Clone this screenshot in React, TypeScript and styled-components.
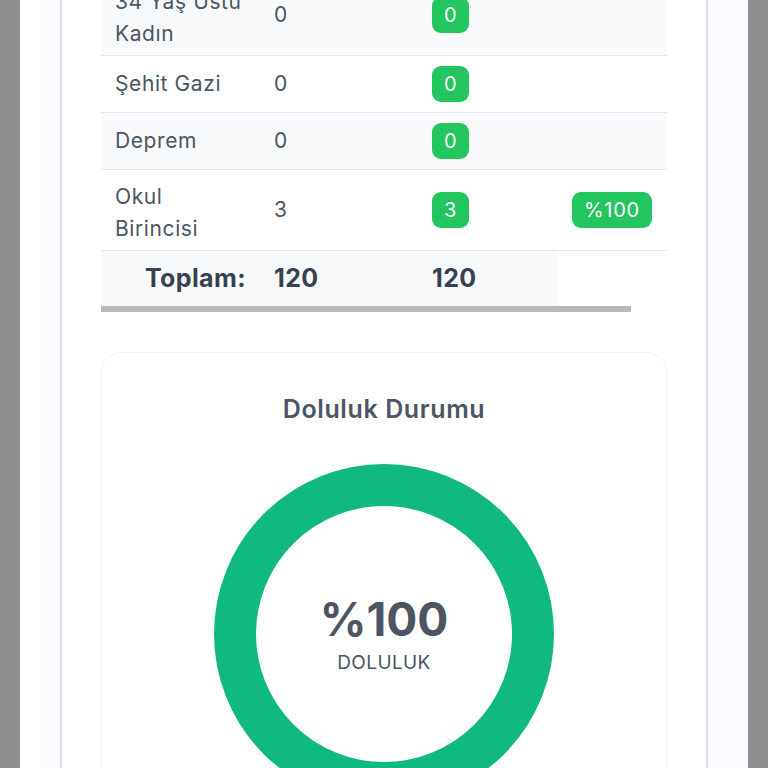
import React from "react"
import styled, { createGlobalStyle } from "styled-components"

const GlobalStyle = createGlobalStyle`
  html, body {
    margin: 0;
    padding: 0;
    background: #8e8e8e;
    font-family: Inter, "Noto Sans", "Liberation Sans", sans-serif;
    overflow: hidden;
  }
`

const Page = styled.div`
  padding: 0 20px;
  min-height: 100vh;
`

const Panel = styled.div`
  background: #ffffff;
  padding-left: 20px;
  min-height: 100vh;
`

const Shell = styled.div`
  background: #fafaff;
  padding: 0 40px 0 20px;
  min-height: 100vh;
`

const Card = styled.div`
  background: #ffffff;
  border-left: 2px solid #dedcf7;
  border-right: 2px solid #dedcf7;
  padding: 0 39px;
  min-height: 100vh;
`

const Scroller = styled.div`
  margin-top: -25px;
  overflow-x: auto;
  overflow-y: hidden;
  scrollbar-width: none;

  &::-webkit-scrollbar {
    display: none;
  }
`

const ScrollTrack = styled.div`
  height: 6px;
`

const ScrollThumb = styled.div`
  height: 100%;
  background: #b9b9b9;
`

const Table = styled.table`
  width: 604px;
  table-layout: fixed;
  border-collapse: collapse;
  color: #4b5563;
  font-size: 21px;
  letter-spacing: 0.6px;
`

const Row = styled.tr`
  border-bottom: 1px solid #e5e7eb;

  &:nth-child(odd) {
    background: #f9fafb;
  }
`

const Cell = styled.td`
  padding: 10px 14px;
  line-height: 30px;
  vertical-align: middle;
`

const Lines = styled.div`
  margin: 1px 0 -5px;
  line-height: 32px;
`

const Badge = styled.span`
  display: inline-block;
  background: #22c55e;
  color: #ffffff;
  border-radius: 9px;
  padding: 4px 12px;
  line-height: 28px;
  font-size: 20px;
  letter-spacing: 0.7px;
`

const FootCell = styled.td<{ $plain?: boolean; $right?: boolean }>`
  padding: 12px 14px 13px;
  line-height: 30px;
  font-size: 25px;
  font-weight: 700;
  letter-spacing: 0.4px;
  color: #374151;
  background: ${({ $plain }) => ($plain ? "transparent" : "#f9fafb")};
  text-align: ${({ $right }) => ($right ? "right" : "left")};
`

const ChartCard = styled.div`
  margin-top: 40px;
  border: 1px solid #f1f2f4;
  border-radius: 20px;
  padding: 40px 0;
  display: flex;
  flex-direction: column;
  align-items: center;
  box-shadow: 0 2px 6px rgba(0, 0, 0, 0.02);
`

const ChartTitle = styled.h3`
  margin: 0;
  font-size: 25px;
  line-height: 32px;
  font-weight: 600;
  letter-spacing: 0.6px;
  color: #4b5563;
`

const Donut = styled.div`
  position: relative;
  width: 340px;
  height: 340px;
  margin-top: 39px;
`

const DonutLabel = styled.div`
  position: absolute;
  inset: 0;
  display: flex;
  flex-direction: column;
  align-items: center;
  justify-content: center;
  color: #4b5563;
`

const Percent = styled.div`
  font-size: 46px;
  line-height: 52px;
  font-weight: 700;
`

const Caption = styled.div`
  margin-top: 6px;
  font-size: 19px;
  line-height: 24px;
  letter-spacing: 0.4px;
`

interface IQuota {
  name: string[];
  total: number;
  filled: number;
  rate?: string;
}

const quotas: IQuota[] = [
  { name: ["34 Yaş Üstü", "Kadın"], total: 0, filled: 0 },
  { name: ["Şehit Gazi"], total: 0, filled: 0 },
  { name: ["Deprem"], total: 0, filled: 0 },
  { name: ["Okul", "Birincisi"], total: 3, filled: 3, rate: "%100" },
]

const columns = [159, 158, 140, 147]
const tableWidth = columns.reduce((a, b) => a + b, 0)
const viewWidth = 566

const App = () => (
  <Page>
    <GlobalStyle />
    <Panel>
      <Shell>
        <Card>
          <Scroller>
            <Table>
              <colgroup>
                {columns.map((w, i) => (
                  <col key={i} style={{ width: w }} />
                ))}
              </colgroup>
              <tbody>
                {quotas.map((q) => (
                  <Row key={q.name.join(" ")}>
                    <Cell>
                      {q.name.length > 1 ? (
                        <Lines>
                          {q.name.map((line) => (
                            <div key={line}>{line}</div>
                          ))}
                        </Lines>
                      ) : (
                        q.name[0]
                      )}
                    </Cell>
                    <Cell>{q.total}</Cell>
                    <Cell>
                      <Badge>{q.filled}</Badge>
                    </Cell>
                    <Cell>{q.rate && <Badge>{q.rate}</Badge>}</Cell>
                  </Row>
                ))}
              </tbody>
              <tfoot>
                <tr>
                  <FootCell $right>Toplam:</FootCell>
                  <FootCell>120</FootCell>
                  <FootCell>120</FootCell>
                  <FootCell $plain />
                </tr>
              </tfoot>
            </Table>
          </Scroller>
          <ScrollTrack>
            <ScrollThumb style={{ width: `${(viewWidth / tableWidth) * viewWidth}px` }} />
          </ScrollTrack>

          <ChartCard>
            <ChartTitle>Doluluk Durumu</ChartTitle>
            <Donut>
              <svg width="340" height="340" viewBox="0 0 340 340">
                <circle cx="170" cy="170" r="149" fill="none" stroke="#10b981" strokeWidth="42" />
              </svg>
              <DonutLabel>
                <Percent>%100</Percent>
                <Caption>DOLULUK</Caption>
              </DonutLabel>
            </Donut>
          </ChartCard>
        </Card>
      </Shell>
    </Panel>
  </Page>
)

export default App
